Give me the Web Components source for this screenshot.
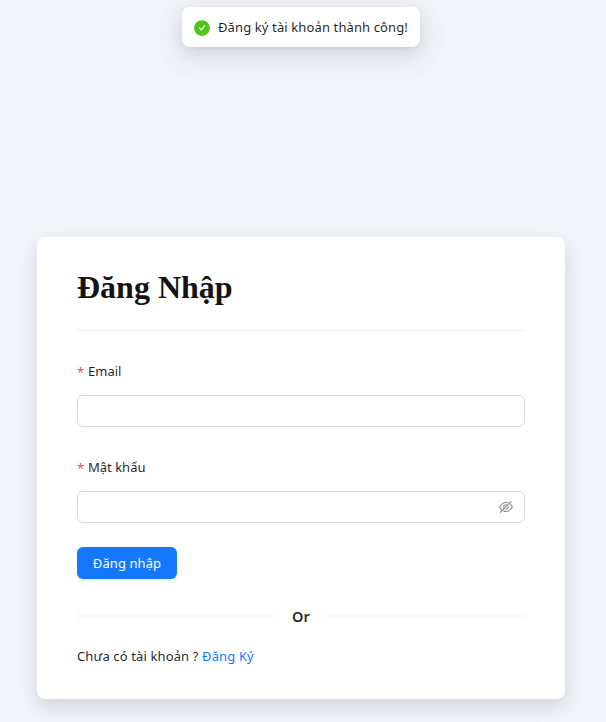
<!DOCTYPE html>
<html lang="vi">
<head>
<meta charset="utf-8">
<title>Đăng Nhập</title>
<style>
html,body{margin:0;height:100%}
body{background:#f0f4f9;font:13px/22px "Noto Sans","Open Sans",sans-serif;color:rgba(0,0,0,.88);overflow:hidden}
</style>
</head>
<body>
<login-page></login-page>
<script>
const define = (name, html) => {
  const t = document.createElement('template');
  t.innerHTML = html;
  customElements.define(name, class extends HTMLElement {
    constructor() {
      super();
      this.attachShadow({mode: 'open'}).append(t.content.cloneNode(true));
    }
  });
};

define('toast-message', `<style>
:host{display:flex;align-items:center;gap:8px;box-sizing:border-box;width:238px;height:40px;padding:0 12px;border-radius:8px;background:#fff;white-space:nowrap;
box-shadow:0 6px 16px rgba(0,0,0,.08),0 3px 6px -4px rgba(0,0,0,.12),0 9px 28px 8px rgba(0,0,0,.05)}
svg{flex:none;width:18px;height:18px;margin:1px -1px 0;fill:#52c41a}
span{letter-spacing:.12px}
</style><svg viewBox="0 0 1024 1024"><path d="M512 64C264.6 64 64 264.6 64 512s200.6 448 448 448 448-200.6 448-448S759.4 64 512 64zm193.5 301.7l-210.6 292a31.8 31.8 0 01-51.7 0L318.5 484.9c-3.8-5.3 0-12.7 6.5-12.7h46.9c10.2 0 19.9 4.9 25.9 13.3l71.2 98.8 157.2-218c6-8.3 15.6-13.3 25.9-13.3H699c6.5 0 10.3 7.4 6.5 12.7z"/></svg><span><slot></slot></span>`);

define('eye-off-icon', `<style>:host{display:block;width:14px;height:14px;color:rgba(0,0,0,.45)}svg{display:block}</style>
<svg width="14" height="14" viewBox="64 64 896 896" fill="currentColor"><path d="M942.2 486.2Q889.47 375.11 816.7 305l-50.88 50.88C807.31 395.53 843.45 447.4 874.7 512 791.5 684.2 673.4 766 512 766q-72.67 0-133.87-22.38L323 798.75Q408 838 512 838q288.3 0 430.2-300.3a60.29 60.29 0 000-51.5zm-63.57-320.64L836 122.88a8 8 0 00-11.32 0L715.31 232.2Q624.86 186 512 186q-288.3 0-430.2 300.3a60.3 60.3 0 000 51.5q56.69 119.4 136.5 191.41L112.48 835a8 8 0 000 11.31L155.17 889a8 8 0 0011.31 0l712.15-712.12a8 8 0 000-11.32zM149.3 512C232.6 339.8 350.7 258 512 258c54.54 0 104.13 9.36 149.12 28.39l-70.3 70.3a176 176 0 00-238.13 238.13l-83.42 83.42C223.1 637.49 183.3 582.28 149.3 512zm246.7 0a112.11 112.11 0 01146.2-106.69L401.31 546.2A112 112 0 01396 512z"/><path d="M508 624c-3.46 0-6.87-.16-10.25-.47l-52.82 52.82a176.09 176.09 0 00227.42-227.42l-52.82 52.82c.31 3.38.47 6.79.47 10.25a111.94 111.94 0 01-112 112z"/></svg>`);

define('form-field', `<style>
:host{display:block}
.label{display:flex;align-items:center;height:24px;gap:4px}
.star{color:#ff4d4f;font:13px/14px "Noto Sans",sans-serif;width:7px;padding-top:1px}
.input{display:flex;align-items:center;justify-content:flex-end;box-sizing:border-box;height:32px;margin-top:12px;padding:0 11px;border:1px solid #d9d9d9;border-radius:6px;background:#fff}
</style><div class="label"><span class="star">*</span><span class="text"><slot></slot></span></div><div class="input"><slot name="suffix"></slot></div>`);

define('primary-button', `<style>
:host{display:flex;align-items:center;justify-content:center;width:100px;height:32px;border-radius:6px;background:#1677ff;color:#fff;box-shadow:0 2px 0 rgba(5,145,255,.1);letter-spacing:.08px}
</style><slot></slot>`);

define('text-divider', `<style>
:host{display:flex;align-items:center;gap:16px;height:24px;font-weight:600;font-size:14.5px}
:host::before,:host::after{content:"";flex:1;height:2px;background:#f8f8f8}
span{width:18px;white-space:nowrap}
</style><span><slot></slot></span>`);

define('login-card', `<style>
:host{display:block;box-sizing:border-box;width:528px;height:462px;padding:29px 40px 0;border-radius:8px;background:#fff;box-shadow:0 8px 20px -1px rgba(0,0,0,.14)}
h1{margin:0;font:bold 32px/42px "Liberation Serif",serif;height:42px;color:#141414}
hr{margin:22px 0 28px;border:0;height:1px;background:#f0f0f0}
form-field{margin-bottom:28px}
form-field+form-field{margin-bottom:24px}
text-divider{margin-top:25px}
p{margin:17px 0 0;height:22px;white-space:nowrap;letter-spacing:.13px}
a{color:#1677ff}
</style>
<h1>Đăng Nhập</h1><hr>
<form-field>Email</form-field>
<form-field>Mật khẩu<eye-off-icon slot="suffix"></eye-off-icon></form-field>
<primary-button>Đăng nhập</primary-button>
<text-divider>Or</text-divider>
<p>Chưa có tài khoản ? <a>Đăng Ký</a></p>`);

define('login-page', `<style>
:host{display:flex;flex-direction:column;align-items:center;box-sizing:border-box;width:602px;height:722px;padding-top:7px}
login-card{margin-top:190px}
</style>
<toast-message>Đăng ký tài khoản thành công!</toast-message>
<login-card></login-card>`);
</script>
</body>
</html>
